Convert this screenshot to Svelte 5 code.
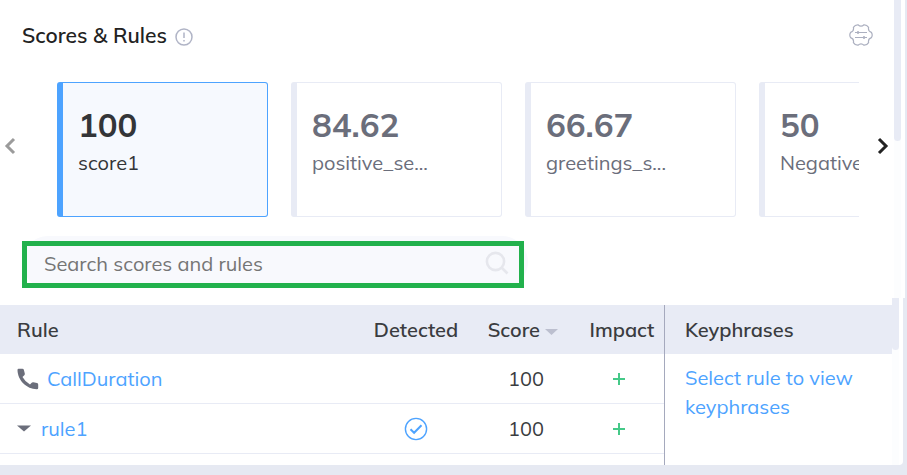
<script>
    let scores = [
        { value: "100", name: "score1" },
        { value: "84.62", name: "positive_se..." },
        { value: "66.67", name: "greetings_s..." },
        { value: "50", name: "Negative" }
    ];

    let rules = [
        { name: "CallDuration", type: "call", detected: false, score: 100 },
        { name: "rule1", type: "group", detected: true, score: 100 }
    ];

    let selected = 0;
    let search = "";
</script>

<div class="page">
    <section class="upper">
        <div class="upper-content">
            <header>
                <h1>Scores &amp; Rules</h1>
                <svg class="info" width="18" height="18" viewBox="0 0 18 18" fill="none" stroke="#b0b4c6" stroke-width="1.5">
                    <circle cx="9" cy="9" r="8" />
                    <path d="M9 4.5v5.5M9 12v1.6" />
                </svg>
                <button class="settings" aria-label="Settings">
                    <svg width="24" height="24" viewBox="0 0 24 24" fill="none" stroke="#acb0c0" stroke-width="1.2" stroke-linejoin="round">
                        <path d="M22.4 9.4Q24 12 22.4 14.6Q18.8 15.8 19.6 19.6Q17.8 22.4 15 22.2Q12 19.4 9 22.2Q6.2 22.4 4.4 19.6Q5.2 15.8 1.6 14.6Q0 12 1.6 9.4Q5.2 8.2 4.4 4.4Q6.2 1.6 9 1.8Q12 4.6 15 1.8Q17.8 1.6 19.6 4.4Q18.8 8.2 22.4 9.4Z" />
                        <path d="M6 9.5h12M6 14.5h12" />
                        <path d="M9 8.2v2.6M15 13.2v2.6" stroke-width="2" />
                    </svg>
                </button>
            </header>

            <div class="carousel">
                <button class="arrow prev" aria-label="Previous scores">
                    <svg width="12" height="18" viewBox="0 0 12 18" fill="none" stroke="#9b9b9b" stroke-width="3">
                        <path d="M10 2L3 9l7 7" />
                    </svg>
                </button>
                <div class="cards">
                    {#each scores as score, i}
                        <button class="card" class:active={selected === i} on:click={() => (selected = i)}>
                            <span class="value">{score.value}</span>
                            <span class="name">{score.name}</span>
                        </button>
                    {/each}
                </div>
                <button class="arrow next" aria-label="Next scores">
                    <svg width="12" height="18" viewBox="0 0 12 18" fill="none" stroke="#222222" stroke-width="3">
                        <path d="M2 2l7 7-7 7" />
                    </svg>
                </button>
            </div>

            <div class="search">
                <input type="text" bind:value={search} placeholder="Search scores and rules" aria-label="Search scores and rules">
                <svg width="24" height="24" viewBox="0 0 24 24" fill="none" stroke="#e6e7ed" stroke-width="2.6">
                    <circle cx="10.5" cy="10.5" r="8.6" />
                    <path d="M16.5 16.5l6 6" />
                </svg>
            </div>
        </div>
        <div class="scrollbar"><div class="thumb"></div></div>
    </section>

    <section class="lower">
        <div class="tables">
            <table>
                <thead>
                    <tr>
                        <th class="rule">Rule</th>
                        <th class="detected">Detected</th>
                        <th class="score">
                            Score
                            <svg width="13" height="6" viewBox="0 0 13 6" fill="#bcbfcf"><path d="M0 0h13L6.5 6z" /></svg>
                        </th>
                        <th class="impact">Impact</th>
                    </tr>
                </thead>
                <tbody>
                    {#each rules as rule}
                        <tr>
                            <td class="rule">
                                <div class="rule-name">
                                    {#if rule.type === "call"}
                                        <svg width="22" height="22" viewBox="0 0 22 22" fill="#6b6e7b">
                                            <path d="M1.6.8H5.4Q6.6.8 6.9 2L7.8 5.6Q8 6.6 7.3 7.3L5.5 9.1Q8.2 14 13 16.5L14.7 14.7Q15.3 14.1 16.3 14.3L20 15.1Q21.2 15.4 21.2 16.6V20Q21.2 21.3 19.8 21.3C9.8 21.3.7 12.5.5 2.1Q.5.8 1.6.8Z" />
                                        </svg>
                                    {:else}
                                        <svg class="caret" width="14" height="7" viewBox="0 0 14 7" fill="#6b6e7b"><path d="M0 .5h14L7 6.5z" /></svg>
                                    {/if}
                                    <a href="#{rule.name}">{rule.name}</a>
                                </div>
                            </td>
                            <td>
                                {#if rule.detected}
                                    <svg width="24" height="24" viewBox="0 0 24 24" fill="none" stroke="#4da3ff" stroke-width="1.4">
                                        <circle cx="12" cy="12" r="10.6" />
                                        <path d="M6.5 12.2l3.6 3.6 7.4-7.6" stroke-width="2" />
                                    </svg>
                                {/if}
                            </td>
                            <td>{rule.score}</td>
                            <td class="impact">
                                <svg width="12" height="12" viewBox="0 0 12 12" stroke="#45c988" stroke-width="2"><path d="M6 0v12M0 6h12" /></svg>
                            </td>
                        </tr>
                    {/each}
                </tbody>
            </table>
            <aside>
                <h2>Keyphrases</h2>
                <p>Select rule to view keyphrases</p>
            </aside>
        </div>
        <div class="scrollbar"><div class="thumb short"></div></div>
    </section>
</div>

<style>
    :global(body) {
        margin: 0;
        background: #e6e9f2;
    }

    .page {
        box-sizing: border-box;
        display: flex;
        flex-direction: column;
        min-height: 100vh;
        padding-bottom: 10px;
        font-family: Mulish, Lato, "Open Sans", sans-serif;
        font-size: 20px;
        color: #3a3c40;
    }

    button {
        border: none;
        background: none;
        padding: 0;
        font: inherit;
        cursor: pointer;
    }

    svg {
        display: block;
        flex-shrink: 0;
    }

    .upper {
        display: flex;
        margin-right: 2px;
        background: #fff;
    }

    .upper-content {
        flex: 1;
        min-width: 0;
        padding-bottom: 10px;
    }

    header {
        display: flex;
        align-items: center;
        height: 70px;
        padding: 0 21px 0 22px;
    }

    h1 {
        margin: 0;
        font-size: 21px;
        font-weight: 600;
        color: #222;
    }

    .info {
        margin: 4px 0 0 8px;
    }

    .settings {
        margin-left: auto;
    }

    /* Score cards */
    .carousel {
        display: flex;
        align-items: center;
        margin-top: 12px;
    }

    .arrow {
        padding-bottom: 8px;
    }

    .prev {
        width: 57px;
        padding-left: 4px;
    }

    .next {
        width: 35px;
        padding-left: 18px;
    }

    .cards {
        display: flex;
        flex: 1;
        min-width: 0;
        gap: 23px;
        overflow: hidden;
    }

    .card {
        box-sizing: border-box;
        display: flex;
        flex: 0 0 211px;
        flex-direction: column;
        height: 135px;
        padding: 22px 15px;
        border: 1px solid #e8ebf5;
        border-left-width: 6px;
        border-radius: 3px;
        color: #6b6e7b;
        text-align: left;
    }

    .card.active {
        border-color: #4da3ff;
        background: #f6f9fe;
        color: #333538;
    }

    .value {
        font-size: 33px;
        font-weight: 700;
        line-height: 40px;
    }

    .name {
        line-height: 36px;
    }

    /* Search box */
    .search {
        position: relative;
        display: flex;
        align-items: center;
        box-sizing: border-box;
        width: 506px;
        max-width: 100%;
        height: 52px;
        margin: 19px 0 0 22px;
        padding: 2px 19px 0 22px;
        border-radius: 26px;
        background: #f8f9fd;
    }

    .search::after {
        content: "";
        position: absolute;
        inset: 5px 4px 0 0;
        border: 5px solid #22b14c;
        pointer-events: none;
    }

    input {
        flex: 1;
        min-width: 0;
        padding: 0;
        border: none;
        outline: none;
        background: none;
        font: inherit;
        color: #3a3c40;
    }

    input::placeholder {
        color: #757575;
        opacity: 1;
    }

    .scrollbar {
        flex: 0 0 7px;
        margin-right: 4px;
        background: #fcfdfe;
    }

    .thumb {
        height: 141px;
        border-radius: 0 0 4px 4px;
        background: #e8ebf5;
    }

    .thumb.short {
        height: 52px;
    }

    /* Rules table */
    .lower {
        display: flex;
        flex: 1;
        margin-right: 4px;
        border-bottom-right-radius: 4px;
        background: #fff;
    }

    .tables {
        display: flex;
        flex: 1;
        min-width: 0;
        padding-top: 7px;
    }

    table {
        flex: 1;
        align-self: flex-start;
        border-spacing: 0;
        table-layout: fixed;
    }

    th {
        height: 49px;
        padding: 0;
        background: #e8ebf5;
        font-weight: 600;
        white-space: nowrap;
    }

    th svg {
        display: inline-block;
        vertical-align: middle;
    }

    td {
        box-sizing: border-box;
        height: 50px;
        padding: 0;
        border-bottom: 1px solid #e8ebf5;
        text-align: center;
    }

    td svg {
        margin: 0 auto;
    }

    .rule {
        padding-left: 17px;
        text-align: left;
    }

    .detected {
        width: 100px;
    }

    .score {
        width: 114px;
        padding-right: 6px;
    }

    .impact {
        width: 72px;
        padding-right: 6px;
    }

    td.impact {
        padding-right: 12px;
    }

    .rule-name {
        display: flex;
        align-items: center;
        gap: 8px;
    }

    .rule-name svg {
        margin: 0;
    }

    .rule-name .caret {
        margin-right: 2px;
    }

    a {
        color: #4da3ff;
        text-decoration: none;
    }

    aside {
        flex: 0 0 227px;
        border-left: 1px solid #a5a9bd;
    }

    h2 {
        margin: 0;
        padding-left: 20px;
        background: #e8ebf5;
        font-size: 20px;
        font-weight: 600;
        line-height: 49px;
    }

    p {
        margin: 9px 20px;
        line-height: 29px;
        color: #4da3ff;
    }
</style>
